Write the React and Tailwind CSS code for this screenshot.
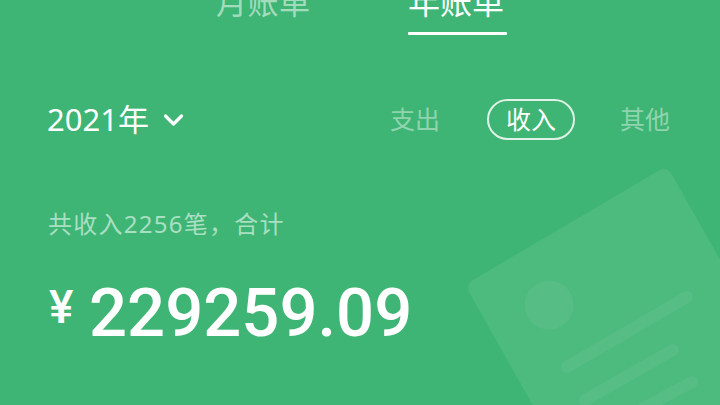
import React from "react";

export default function App() {
  return (
    <div className="relative h-[405px] w-[720px] overflow-hidden bg-[#3eb574] text-white font-['Noto_Sans','Noto_Sans_CJK_SC',sans-serif]">
      <svg className="absolute inset-0" width="720" height="405" viewBox="0 0 720 405" fill="none">
        <path d="M658 171 Q666 166 671 173 L760 330 L760 430 L540 418 L470 294 Q465 285 473 280 Z" fill="#ffffff" fillOpacity="0.08" />
        <circle cx="549" cy="305" r="24.5" fill="#ffffff" fillOpacity="0.05" />
        <g stroke="#ffffff" strokeOpacity="0.05" strokeWidth="12" strokeLinecap="round">
          <path d="M567 367 L687 297" />
          <path d="M585 400 L673 350" />
          <path d="M640 410 L692 382" />
        </g>
      </svg>

      <div className="relative flex flex-col">
        <div className="-mt-[19px] flex pl-[216px] gap-[98px]">
          <div className="text-[#a3dcbd] text-[31px] leading-[42px] tracking-[0.5px] w-[94px] whitespace-nowrap">月账单</div>
          <div className="flex flex-col w-[99px]">
            <div className="text-[32px] leading-[42px] whitespace-nowrap">年账单</div>
            <div className="mt-[9px] h-[3px] w-full bg-white rounded-[1px]" />
          </div>
        </div>

        <div className="mt-[64px] flex items-center pl-[47px] h-[41px]">
          <div className="text-[31px] leading-[41px] whitespace-nowrap">2021年</div>
          <svg className="ml-[14px] mt-[1px]" width="21" height="14" viewBox="0 0 21 14" fill="none">
            <path d="M2.5 3 L10.5 11 L18.5 3" stroke="#ffffff" strokeWidth="3.2" strokeLinecap="round" strokeLinejoin="round" />
          </svg>
          <div className="ml-auto flex items-center pr-[50px] text-[25px]">
            <span className="text-[#8fd4ae]">支出</span>
            <span className="ml-[47px] flex h-[41px] w-[88px] items-center justify-center rounded-full border-2 border-[#dff2e8]">收入</span>
            <span className="ml-[45px] text-[#8fd4ae]">其他</span>
          </div>
        </div>

        <div className="mt-[66px] pl-[48px] text-[24px] leading-[36px] tracking-[1.25px] text-[#a9dfc2] whitespace-nowrap">共收入2256笔，合计</div>

        <div className="mt-[31px] flex items-center pl-[49px] h-[80px] font-['Roboto'] font-medium">
          <span className="text-[46px] leading-[80px] -mt-[13px] w-[40px]">¥</span>
          <span className="text-[67px] leading-[80px] whitespace-nowrap">229259.09</span>
        </div>
      </div>
    </div>
  );
}
